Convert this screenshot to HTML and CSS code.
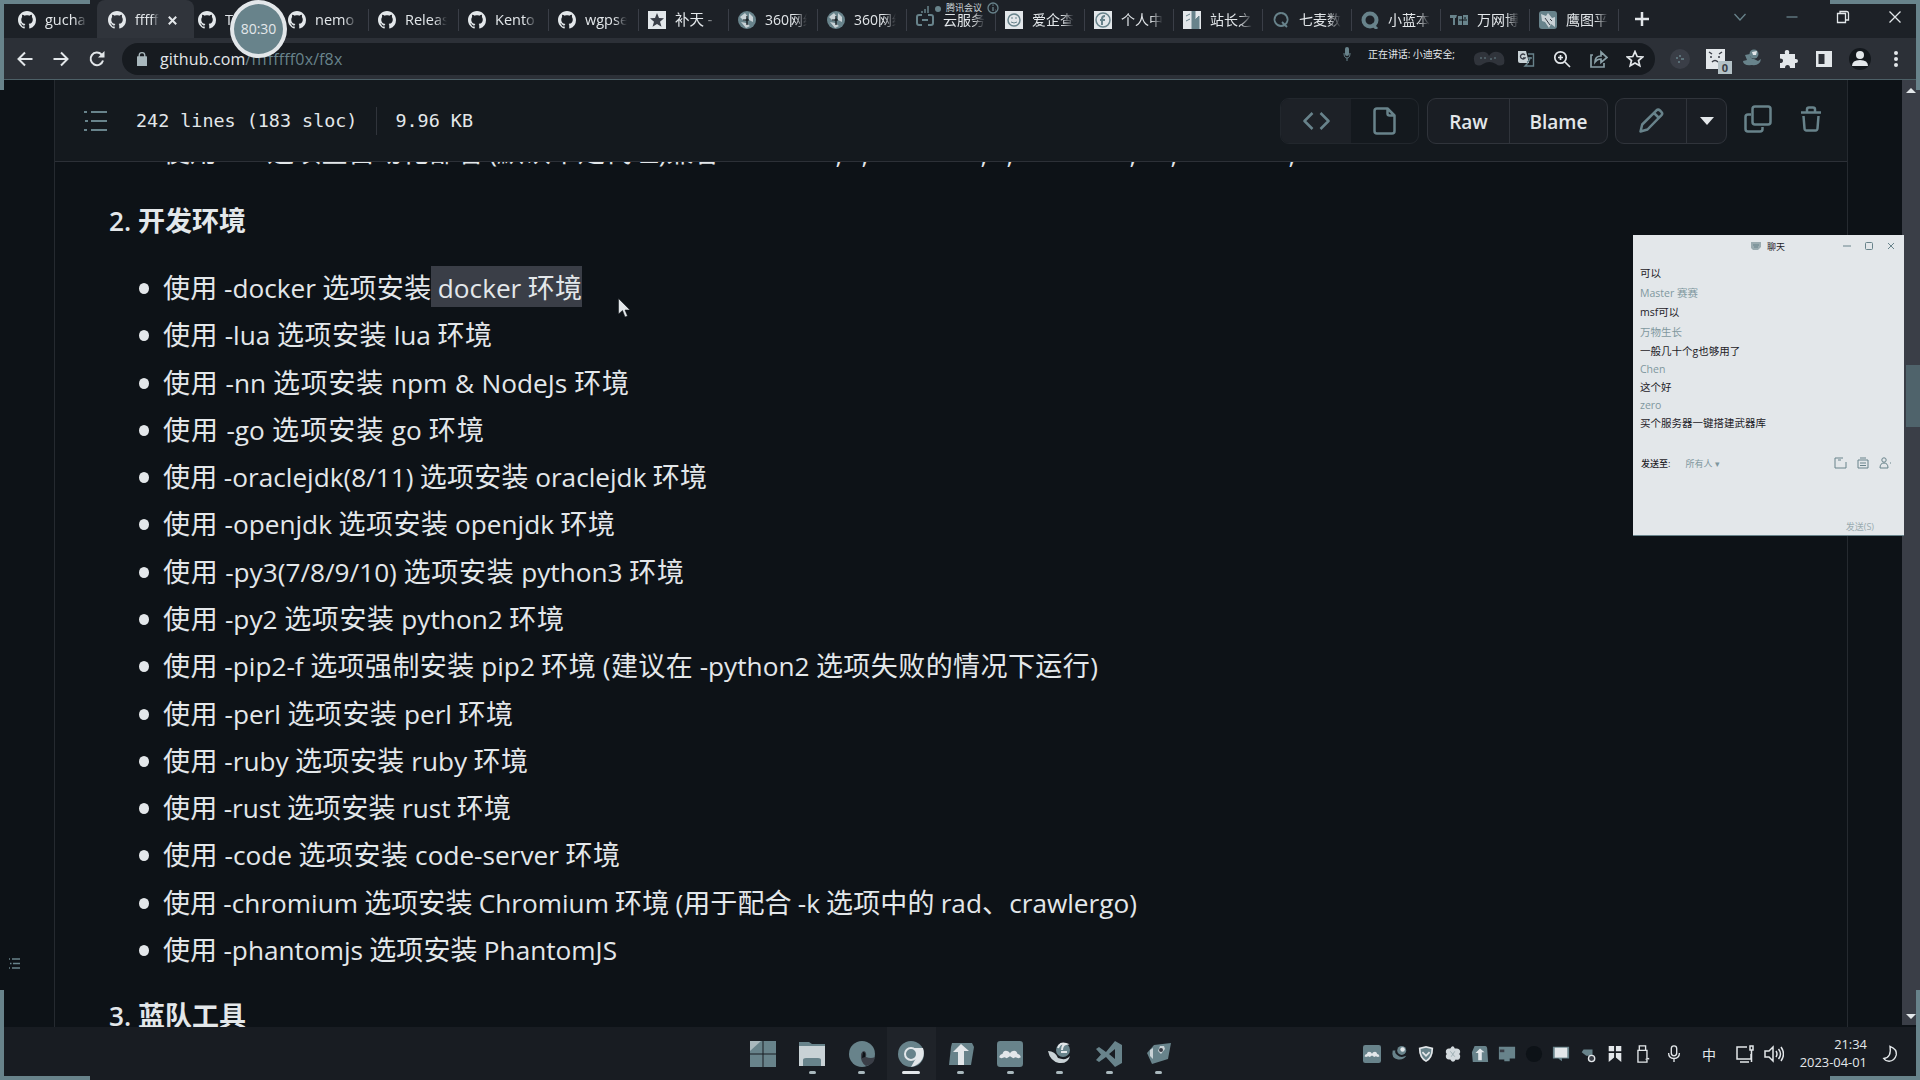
FILE: index.html
```html
<!DOCTYPE html>
<html lang="zh-CN">
<head>
<meta charset="utf-8">
<title>f8x</title>
<link rel="stylesheet" href="styles.css">
</head>
<body>
<svg class="defs">
  <symbol id="gh" viewBox="0 0 16 16"><path d="M8 0C3.58 0 0 3.58 0 8c0 3.54 2.29 6.53 5.47 7.59.4.07.55-.17.55-.38 0-.19-.01-.82-.01-1.49-2.01.37-2.53-.49-2.69-.94-.09-.23-.48-.94-.82-1.13-.28-.15-.68-.52-.01-.53.63-.01 1.08.58 1.23.82.72 1.21 1.87.87 2.33.66.07-.52.28-.87.51-1.07-1.78-.2-3.64-.89-3.64-3.95 0-.87.31-1.59.82-2.15-.08-.2-.36-1.02.08-2.12 0 0 .67-.21 2.2.82.64-.18 1.32-.27 2-.27s1.36.09 2 .27c1.53-1.04 2.2-.82 2.2-.82.44 1.1.16 1.92.08 2.12.51.56.82 1.27.82 2.15 0 3.07-1.87 3.75-3.65 3.95.29.25.54.73.54 1.48 0 1.07-.01 1.93-.01 2.2 0 .21.15.46.55.38A8.01 8.01 0 0 0 16 8c0-4.42-3.58-8-8-8z"/></symbol>
  <symbol id="globe" viewBox="0 0 18 18"><circle cx="9" cy="9" r="9" fill="#68838b"/><path d="M2 6l5-4 3 4-4 4zM11 2l4 4v5l-4-2zM3 11l5 1 4 3-4 2z" fill="#c9d2d6"/><path d="M9 5v9M5 9h6" stroke="#0d1217" stroke-width="1.200"/></symbol>
  <symbol id="meet" viewBox="0 0 24 24"><rect width="24" height="24" rx="3" fill="#68838b"/><path d="M2 15q1-3 3-3 1-3 3-3 3 0 4 2.500 1-2.500 4-2.500 2 0 3 3 2 0 3 3l-2 1-3-1-2 1-3-2-3 2-2-1-3 1z" fill="#e3e7ea"/></symbol>
</svg>

<header class="chrome">
  <div class="tabs">
    <div class="tab"><svg class="fav"><use href="#gh"/></svg><span>guchan</span></div>
    <div class="tab active"><svg class="fav"><use href="#gh"/></svg><span>ffffff</span><svg class="tab-x" viewBox="0 0 9 9"><path d="M.8.8l7.4 7.4M8.200.8L.8 8.200"/></svg></div>
    <div class="tab"><svg class="fav"><use href="#gh"/></svg><span>T</span></div>
    <div class="tab"><svg class="fav"><use href="#gh"/></svg><span>nemo</span></div>
    <div class="tab"><svg class="fav"><use href="#gh"/></svg><span>Releas</span></div>
    <div class="tab"><svg class="fav"><use href="#gh"/></svg><span>Kento</span></div>
    <div class="tab"><svg class="fav"><use href="#gh"/></svg><span>wgpse</span></div>
    <div class="tab"><svg class="fav" viewBox="0 0 18 18"><rect width="18" height="18" fill="#e3e7ea"/><path d="M9 2l2 5 5 .3-4 3.400 1.500 5L9 13l-4.500 2.700 1.500-5-4-3.400L7 7z" fill="#3a3e47"/></svg><span>补天 -</span></div>
    <div class="tab"><svg class="fav"><use href="#globe"/></svg><span>360网络</span></div>
    <div class="tab"><svg class="fav"><use href="#globe"/></svg><span>360网络</span></div>
    <div class="tab"><svg class="fav" viewBox="0 0 18 18"><path d="M6 4H3q-2 0-2 2v6q0 2 2 2h3M12 4h3q2 0 2 2v6q0 2-2 2h-3M6 9h6" fill="none" stroke="#68838b" stroke-width="2"/></svg><span>云服务</span></div>
    <div class="tab"><svg class="fav" viewBox="0 0 18 18"><rect width="18" height="18" fill="#e3e7ea"/><circle cx="9" cy="9" r="6" fill="none" stroke="#68838b" stroke-width="1.500"/><path d="M6 7h2M10 7h2M6 11q3 2 6 0" fill="none" stroke="#68838b"/></svg><span>爱企查</span></div>
    <div class="tab"><svg class="fav" viewBox="0 0 18 18"><rect width="18" height="18" fill="#e3e7ea"/><circle cx="9" cy="9" r="7" fill="none" stroke="#68838b" stroke-width="1.500"/><path d="M11 5q-3 0-3 3v6M6 9h5" fill="none" stroke="#68838b" stroke-width="2"/></svg><span>个人中</span></div>
    <div class="tab"><svg class="fav" viewBox="0 0 18 18"><rect width="18" height="18" fill="#e3e7ea"/><path d="M9 0h3v9l4-4v13h-7zM3 5l4-2M3 10l4-2" fill="#68838b" stroke="#68838b"/></svg><span>站长之</span></div>
    <div class="tab"><svg class="fav" viewBox="0 0 18 18"><path d="M9 2a6.500 6.500 0 1 0 .1 0M10 11l5 5" fill="none" stroke="#68838b" stroke-width="1.800"/></svg><span>七麦数</span></div>
    <div class="tab"><svg class="fav" viewBox="0 0 18 18"><circle cx="9" cy="9" r="6.500" fill="none" stroke="#68838b" stroke-width="4"/><path d="M11 13l5 5" stroke="#68838b" stroke-width="3"/></svg><span>小蓝本</span></div>
    <div class="tab"><svg class="fav" viewBox="0 0 18 18"><path d="M0 4h7l-1 3H5v7H3V7H0zM8 5h4v9H8zM13 4h5v10h-5z" fill="#68838b"/><path d="M9 9h8M14 7h2" stroke="#0d1217"/></svg><span>万网博</span></div>
    <div class="tab"><svg class="fav" viewBox="0 0 18 18"><rect width="18" height="18" rx="3" fill="#68838b"/><path d="M2 3l5 2 2-3 4 5 3-1v10l-4-3-2 4-4-6-3-1z" fill="#c9d2d6"/><path d="M6 7l5 7M11 8l2 2" stroke="#3a3e47"/></svg><span>鹰图平</span></div>
    <svg class="plus" viewBox="0 0 14 14"><path d="M7 0v14M0 7h14"/></svg>
    <div class="winctl">
      <svg viewBox="0 0 16 16"><path class="dim" d="M2.500 5L8 11l5.500-6"/></svg>
      <svg viewBox="0 0 16 16"><path class="dim" d="M2.500 8h11"/></svg>
      <svg viewBox="0 0 16 16"><path d="M2.500 4.500h8v9h-8zM5 4V2.500h6.500q2 0 2 2V11H11"/></svg>
      <svg viewBox="0 0 16 16"><path d="M2.500 2.500l11 11M13.500 2.500l-11 11"/></svg>
    </div>
  </div>
  <div class="toolbar">
    <svg class="nav" viewBox="0 0 16 16"><path d="M15.500 8H2M8 1.500L1.500 8 8 14.500"/></svg>
    <svg class="nav" viewBox="0 0 16 16"><path d="M.5 8H14M8 1.500L14.500 8 8 14.500"/></svg>
    <svg class="nav" viewBox="0 0 16 16"><path d="M14 9.500A6.300 6.300 0 1 1 12.500 3.500L14.500 5.500"/><path d="M15.500 0v6.500H9z" class="solid"/></svg>
    <div class="omnibox">
      <svg class="lock" viewBox="0 0 10 14"><rect y="5" width="10" height="9" rx="1"/><path d="M2.200 6V3.500a2.800 2.800 0 0 1 5.600 0V6"/></svg>
      <span class="url">github.com<span>/ffffffff0x/f8x</span></span>
      <div class="speaker">
        <svg viewBox="0 0 8 14"><rect x="2" width="4" height="9" rx="2"/><path d="M1 6q0 5 3 5t3-5M4 11v3"/></svg>
        <span>正在讲话: 小迪安全;</span>
      </div>
      <svg class="blob" viewBox="0 0 32 16"><path d="M2 13Q-2 2 8 1q6-1 8 4 3-5 9-4 8 2 6 12-5 3-8 0-7-4-13 0-4 3-8 0z" fill="#30343b"/><path d="M7 7h2M12 6v2M17 8h2M22 6v2" stroke="#68838b"/></svg>
      <svg class="act" viewBox="0 0 18 18"><path d="M1 1h8l3 12H3q-2 0-2-2z" fill="#c9d2d6"/><path d="M11 4h5.500v12H8l3-3M11 8h4M13 7q0 4-3 5" fill="none" stroke="#68838b" stroke-width="1.400"/><path d="M8 5a2.500 2.500 0 1 0 0 3H6" fill="none" stroke="#3a3e47" stroke-width="1.300"/></svg>
      <svg class="act line" viewBox="0 0 18 18"><circle cx="7.500" cy="7.500" r="5.700"/><path d="M12 12l5 5M5 7.500h5M7.500 5v5"/></svg>
      <svg class="act line teal" viewBox="0 0 18 18"><path d="M3 5H1v12h13v-4"/><path d="M5 12q0-6 6-6V2l6 5.500-6 5V9q-4 0-6 3z"/></svg>
      <svg class="act line" viewBox="0 0 18 18"><path d="M9 1.500l2.200 5 5.400.5-4.100 3.500 1.300 5.300L9 13l-4.800 2.800 1.300-5.300L1.400 7l5.400-.5z"/></svg>
    </div>
    <div class="exts">
      <svg viewBox="0 0 20 20"><circle cx="10" cy="10" r="10" fill="#3a3e47"/><path d="M6 9h2M10 6v2M11 10h3M9 12v2" stroke="#68838b" stroke-width="1.500"/></svg>
      <svg viewBox="0 0 20 20"><rect width="19" height="20" fill="#e3e7ea"/><path d="M3 3l3 2M16 3l-3 2M5 7v2M13 7v2M6 13q3-3 6 0" stroke="#3a3e47" stroke-width="1.500" fill="none"/></svg>
      <svg viewBox="0 0 20 20"><path d="M3 6l5-1q0 5 4 5l4 2 3-2q-1 7-9 6-9 1-9-4l4-1z" fill="#68838b"/><circle cx="12" cy="5" r="4.500" fill="#68838b"/><path d="M10 3l5-1-1 4h-3z" fill="#e3e7ea"/></svg>
      <svg viewBox="0 0 20 20"><path d="M2 5h5q-1-4 2-4t2 4h6v5q3-.5 3 2t-3 2v5h-5q0-3-2.500-3T7 19H2v-5q3 0 3-2.300T2 9.500z" fill="#e3e7ea"/></svg>
      <svg viewBox="0 0 20 20"><path d="M2 2h16v16H2zM4.500 5v10h6V5z" fill="#e3e7ea" fill-rule="evenodd"/></svg>
      <svg viewBox="0 0 20 20"><circle cx="10" cy="10" r="11" fill="#14181d"/><circle cx="10" cy="6" r="4" fill="#e3e7ea"/><path d="M2 17q0-6 8-6t8 6z" fill="#e3e7ea"/></svg>
      <svg viewBox="0 0 20 20"><circle cx="10" cy="4" r="2" fill="#e3e7ea"/><circle cx="10" cy="10" r="2" fill="#e3e7ea"/><circle cx="10" cy="16" r="2" fill="#e3e7ea"/></svg>
    </div>
  </div>
</header>

<main class="page">
  <aside class="side"><svg viewBox="0 0 11 11"><path d="M0 1h1M3 1h8M1 5.500h1.500M4 5.500h7M0 10h1M3 10h8"/></svg></aside>
  <section class="blob-box">
    <div class="filebar">
      <svg class="toc" viewBox="0 0 24 22"><path d="M0 2h3M7 2h16M1 11h3M7 11h16M0 20h3M7 20h16"/></svg>
      <span class="stat">242 lines (183 sloc)</span><i class="vr"></i><span class="stat">9.96 KB</span>
      <div class="group views">
        <div class="on"><svg width="27" height="18" viewBox="0 0 27 18"><path d="M9.500 1L1.500 9l8 8M17.500 1l8 8-8 8"/></svg></div>
        <div><svg width="23" height="28" viewBox="0 0 23 28"><path d="M4 1.500h10.500l7 7V24q0 2.500-2.500 2.500H4Q1.500 26.500 1.500 24V4Q1.500 1.500 4 1.500zM14.500 2v4.500q0 2 2 2H21"/></svg></div>
      </div>
      <div class="group raw"><div>Raw</div><div>Blame</div></div>
      <div class="group edit">
        <div><svg width="25" height="25" viewBox="0 0 25 25"><path d="M1.500 23.500l1.700-7L17.500 2.300q1.700-1.500 3.500.2l1.300 1.300q1.700 1.700.2 3.400L8.500 21.500zM15 5l5 5"/></svg></div>
        <div><svg width="14" height="8" viewBox="0 0 14 8"><path class="caret" d="M0 0h14L7 8z"/></svg></div>
      </div>
      <svg class="copy" width="28" height="28" viewBox="0 0 28 28"><path d="M11 1.500h13q2.500 0 2.500 2.500v13q0 2.500-2.500 2.500H11q-2.500 0-2.500-2.500V4q0-2.500 2.500-2.500zM7 9.500H4Q1.500 9.500 1.500 12v12q0 2.500 2.500 2.500h12q2.500 0 2.500-2.500v-2"/></svg>
      <svg class="trash" width="22" height="26" viewBox="0 0 22 26"><path d="M1 6.500h20M7 6V3.500Q7 1.500 9 1.500h4q2 0 2 2V6M3.500 10l1 12.500q.2 2 2 2h9q1.800 0 2-2l1-12.500"/></svg>
    </div>
    <article class="md">
      <div class="cut"><span>使用 <b class="gap"></b>选项全自动化部署 <i>(</i>默认不走代理<i>)</i>兼容</span><em class="c1">,</em><em class="c2">,</em><em class="c3">,</em><em class="c2">,</em><em class="c4">,</em><em class="c5">,</em><em class="c6">,</em></div>
      <h3><i>2.</i><span>开发环境</span></h3>
      <ul>
        <li style="width:419px">使用 <i>-docker</i> 选项安装<mark> <i>docker</i> 环境</mark></li>
        <li style="width:329px">使用 <i>-lua</i> 选项安装 <i>lua</i> 环境</li>
        <li style="width:466px">使用 <i>-nn</i> 选项安装 <i>npm &amp; NodeJs</i> 环境</li>
        <li style="width:321px">使用 <i>-go</i> 选项安装 <i>go</i> 环境</li>
        <li style="width:544px">使用 <i>-oraclejdk(8/11)</i> 选项安装 <i>oraclejdk</i> 环境</li>
        <li style="width:452px">使用 <i>-openjdk</i> 选项安装 <i>openjdk</i> 环境</li>
        <li style="width:521px">使用 <i>-py3(7/8/9/10)</i> 选项安装 <i>python3</i> 环境</li>
        <li style="width:401px">使用 <i>-py2</i> 选项安装 <i>python2</i> 环境</li>
        <li style="width:935px">使用 <i>-pip2-f</i> 选项强制安装 <i>pip2</i> 环境 <i>(</i>建议在 <i>-python2</i> 选项失败的情况下运行<i>)</i></li>
        <li style="width:350px">使用 <i>-perl</i> 选项安装 <i>perl</i> 环境</li>
        <li style="width:365px">使用 <i>-ruby</i> 选项安装 <i>ruby</i> 环境</li>
        <li style="width:348px">使用 <i>-rust</i> 选项安装 <i>rust</i> 环境</li>
        <li style="width:457px">使用 <i>-code</i> 选项安装 <i>code-server</i> 环境</li>
        <li style="width:974px">使用 <i>-chromium</i> 选项安装 <i>Chromium</i> 环境 <i>(</i>用于配合 <i>-k</i> 选项中的 <i>rad</i>、<i>crawlergo)</i></li>
        <li style="width:454px">使用 <i>-phantomjs</i> 选项安装 <i>PhantomJS</i></li>
      </ul>
      <h3 class="next"><i>3.</i><span>蓝队工具</span></h3>
    </article>
  </section>
  <div class="scroll"><i class="up"></i><b></b><i class="down"></i></div>
</main>

<footer class="taskbar">
  <div class="apps">
    <div><svg viewBox="0 0 26 26"><path d="M0 0h12.500v12.500H0zM13.500 0H26v12.500H13.500zM0 13.500h12.500V26H0zM13.500 13.500H26V26H13.500z" fill="#68838b"/><path d="M0 0h11L0 10z" fill="#a9b8bd"/></svg></div>
    <div class="run"><svg viewBox="0 0 26 26"><path d="M0 1h10l3 2h13v22H0z" fill="#68838b"/><path d="M0 5h26v20H0z" fill="#c9d2d6"/><path d="M4 25v-6q0-2 3-2h12q3 0 3 2v6z" fill="#68838b"/></svg></div>
    <div class="run"><svg viewBox="0 0 26 26"><circle cx="13" cy="13" r="13" fill="#68838b"/><path d="M12 13q1-3 3-3 3 1 2 6 5 2 9 0-1 8-9 9-6-4-5-12z" fill="#3a3e47"/><path d="M14 11q3 0 2 5l-3 1z" fill="#0d1217"/></svg></div>
    <div class="run wide"><svg viewBox="0 0 26 26"><circle cx="13" cy="13" r="13" fill="#68838b"/><path d="M13 7h12q3 10-5 16-4 3-7 3l5-9z" fill="#e3e7ea"/><circle cx="13" cy="13" r="6" fill="#68838b" stroke="#e3e7ea" stroke-width="2"/></svg></div>
    <div class="run"><svg viewBox="0 0 26 26"><path d="M4 2h20l2 4-3 18H1l2-18z" fill="#68838b"/><path d="M13 3l8 7h-5v14h-6V11H5z" fill="#e3e7ea"/></svg></div>
    <div class="run"><svg><use href="#meet"/></svg></div>
    <div class="run"><svg viewBox="0 0 26 26"><circle cx="16" cy="9" r="7" fill="#68838b"/><path d="M1 10q7 0 10 7 8 3 12-2-2 8-11 7Q3 20 1 10z" fill="#c9d2d6"/><path d="M11 7q2-6 8-4-4 1-4 6M14 11h6" stroke="#e3e7ea" stroke-width="2" fill="none"/></svg></div>
    <div class="run"><svg viewBox="0 0 26 26"><path d="M0 8l3-2 7 5L19 0l7 4v18l-7 4-9-10-7 5-3-2 5-5.500zM19 8l-6 5 6 5z" fill="#68838b" fill-rule="evenodd"/></svg></div>
    <div class="run"><svg viewBox="0 0 26 26"><path d="M8 4l17-2-3 16L6 23 1 12z" fill="#68838b"/><path d="M4 9l3-2v11l-3-3zM14 5h4l1 3-4 5-3-3z" fill="#c9d2d6"/><circle cx="15" cy="9" r="2" fill="#3a3e47"/></svg></div>
  </div>
  <div class="tray">
    <svg><use href="#meet"/></svg>
    <svg viewBox="0 0 20 20"><circle cx="13" cy="6" r="5" fill="#68838b"/><circle cx="14" cy="5" r="2.500" fill="#e3e7ea"/><path d="M3 6q-2 9 6 10 6 1 9-4-6 3-10-1-3-2-2-5z" fill="#68838b"/></svg>
    <svg viewBox="0 0 20 20"><path d="M2 3l8-2 8 2q0 12-8 16Q2 15 2 3z" fill="#e3e7ea"/><path d="M4 4.500L10 3l6 1.500Q16 13 10 17 4 13 4 4.500z" fill="#68838b"/><path d="M6 8l4 4 4-4" stroke="#e3e7ea" stroke-width="2" fill="none"/></svg>
    <svg viewBox="0 0 20 20"><path d="M7 4q3-5 5 0 6-1 6 4-2 2 0 4 0 6-5 4-3 5-6 0-5 1-5-4 2-2 0-4 0-5 5-4z" fill="#d3dade"/><path d="M7 7l5 6M12 7l-4 6" stroke="#9aabb0"/></svg>
    <svg viewBox="0 0 20 20"><path d="M4 1h12q2 0 2 3l1 15H2L1 8z" fill="#68838b"/><path d="M10 4l5 4h-3v9H8V9H5z" fill="#e3e7ea"/></svg>
    <svg viewBox="0 0 20 20"><path d="M1 2h18v13H13v3H7v-2H1z" fill="#68838b"/><path d="M2 5h5v3H2z" fill="#3a3e47"/></svg>
    <svg viewBox="0 0 20 20"><circle cx="10" cy="10" r="9" fill="#0d1217"/></svg>
    <svg viewBox="0 0 20 20"><path d="M1 2h18v13H11v3l-4-3H1z" fill="#68838b"/><path d="M3 3h14v11H3z" fill="#e3e7ea"/></svg>
    <svg viewBox="0 0 20 20"><path d="M5 5h10v7H8L3 8z" fill="#68838b"/><circle cx="14" cy="15" r="3.500" fill="#3a3e47" stroke="#e3e7ea" stroke-width="1.500"/></svg>
    <svg viewBox="0 0 20 20"><path d="M3 1h6v6H3zM11 1h6v6h-6zM3 9h6v5l-6 5zM11 9h6v10l-6-5z" fill="#e3e7ea"/></svg>
    <svg class="w" viewBox="0 0 20 20"><path d="M7 1h7v5H7zM5.500 6h10v13h-10zM14 16l4-1"/></svg>
    <svg class="w mic" viewBox="0 0 20 20"><rect x="7" y="1" width="6" height="11" rx="3"/><path d="M4 9q0 6 6 6t6-6M10 15v4"/></svg>
    <span class="ime">中</span>
    <svg class="w net" viewBox="0 0 20 20"><path d="M12 3H2v12h14v-5M5 18h9M15 2h3v4h-3zM16.500 6v12"/></svg>
    <svg class="w vol" viewBox="0 0 20 20"><path d="M1 7h4l4-4v14l-4-4H1zM12 7q2 3 0 6M14.500 5q4 5 0 10M17 3q5 7 0 14"/></svg>
    <div class="clock"><span>21:34</span><span>2023-04-01</span></div>
    <svg class="w moon" viewBox="0 0 20 20"><path d="M10 1.500q8 3 7 9.500-2 7-8 7-4 0-6-3 9-1 7-13.500z"/></svg>
  </div>
</footer>

<div class="badge">0</div>
<div class="meeting"><svg viewBox="0 0 24 10"><path d="M1 10V8M4 10V6M7 10V3" stroke="#68838b" stroke-width="1.500"/><circle cx="17" cy="6" r="3" fill="#68838b"/></svg><span>腾讯会议</span><svg class="info" viewBox="0 0 12 12"><circle cx="6" cy="6" r="5"/><path d="M6 5v4M6 2.500v1.200"/></svg></div>
<div class="timer">80:30</div>
<svg class="cursor" viewBox="0 0 13 20"><path d="M.5.500v15.500l4-3.500 2.500 6.500 2.500-1-2.500-6h5z"/></svg>

<section class="chat">
  <div class="chat-title"><svg viewBox="0 0 10 8"><path d="M0 0h10v5L7 8H2L0 6z" fill="#9aabb0"/><path d="M2 3h6M3 5h4" stroke="#68838b"/></svg><span>聊天</span>
    <div class="chat-ctl"><svg viewBox="0 0 8 8"><path d="M0 4h8"/></svg><svg viewBox="0 0 8 8"><rect x=".5" y=".5" width="7" height="7" rx="1"/></svg><svg viewBox="0 0 8 8"><path d="M1 1l6 6M7 1L1 7"/></svg></div>
  </div>
  <div class="msgs">
    <p>可以</p><p class="n">Master 赛赛</p><p>msf可以</p><p class="n">万物生长</p><p>一般几十个g也够用了</p><p class="n">Chen</p><p>这个好</p><p class="n">zero</p><p>买个服务器一键搭建武器库</p>
  </div>
  <div class="sendto"><b>发送至:</b><span>所有人 ▾</span>
    <svg viewBox="0 0 14 12"><path d="M9 1H1v10h11V5M4 3h3"/></svg><svg viewBox="0 0 14 12"><path d="M2 3h10v8H2zM4 1h6M4 6h6M4 8.500h6"/></svg><svg viewBox="0 0 14 12"><circle cx="6" cy="3" r="2.200"/><path d="M2 11q0-5 4-5t4 5zM12 6h1"/></svg>
  </div>
  <div class="send">发送(S)</div>
</section>

<i class="corner tl"></i><i class="corner tr"></i><i class="corner bl"></i><i class="corner br"></i>
</body>
</html>
```
FILE: styles.css
```css
:root { --ink: #0d1217; --grey: #3a3e47; --teal: #68838b; --white: #e3e7ea; }
* { box-sizing: border-box; }
body { margin: 0; width: 1920px; height: 1080px; overflow: hidden; display: flex; flex-direction: column; background: var(--ink); color: var(--white); font-family: "Open Sans", "Noto Sans CJK SC", sans-serif; }
i, em { font-style: normal; }
svg { flex: none; display: block; }
.defs { display: none; }

.chrome { height: 80px; flex: none; border-bottom: 1px solid #4d6067; background: #1d2127; }
.tabs { height: 38px; display: flex; align-items: center; padding-left: 9px; }
.tab { width: 90px; height: 38px; flex: none; display: flex; align-items: center; padding: 2px 8px 0 9px; position: relative; }
.tab:nth-child(n+9) { width: 89px; }
.tab:nth-child(n+4)::after { content: ""; position: absolute; right: 0; top: 9px; width: 1px; height: 22px; background: var(--grey); }
.tab.active { background: #30343b; border-radius: 8px 8px 0 0; margin-left: -2px; width: 97px; padding-left: 11px; margin-right: -5px; }
.fav { width: 18px; height: 18px; fill: var(--white); }
.tab span { margin-left: 9px; width: 42px; font-size: 14px; line-height: 20px; white-space: nowrap; overflow: hidden; -webkit-mask: linear-gradient(90deg, #000 70%, transparent); mask: linear-gradient(90deg, #000 70%, transparent); }
.tab:not(.active):nth-child(-n+8) span { font-size: 14.500px; }
.tab.active span { width: 24px; }
.tab-x { width: 9px; height: 9px; margin-left: 9px; stroke: var(--white); stroke-width: 2; }
.plus { width: 14px; height: 14px; margin-left: 16px; stroke: var(--white); stroke-width: 2.500; }
.winctl { margin-left: auto; padding-right: 17px; display: flex; gap: 35.600px; margin-top: -4px; }
.winctl svg { width: 16px; height: 16px; fill: none; stroke: var(--white); stroke-width: 1.300; }
.winctl .dim { stroke: var(--teal); }

.toolbar { height: 41px; display: flex; align-items: center; background: #2c3037; padding-left: 17px; }
.nav { width: 16px; height: 16px; margin-right: 20px; fill: none; stroke: var(--white); stroke-width: 2; }
.nav .solid { fill: var(--white); stroke: none; }
.omnibox { width: 1533px; height: 32px; margin-left: -3px; border-radius: 16px; background: #171b20; display: flex; align-items: center; padding: 0 11px 0 15px; }
.lock { width: 10px; height: 14px; fill: #a9b8bd; stroke: #a9b8bd; stroke-width: 1.300; }
.lock path { fill: none; }
.url { margin-left: 13px; font-size: 16px; line-height: 24px; letter-spacing: .12px; }
.url span { color: var(--teal); }
.speaker { margin-left: auto; display: flex; align-items: center; gap: 17px; font-size: 10px; line-height: 14px; padding-bottom: 9px; white-space: nowrap; }
.speaker span { width: 80px; letter-spacing: -.1px; }
.speaker svg { width: 8px; height: 14px; fill: var(--teal); }
.speaker path { fill: none; stroke: var(--teal); }
.blob { width: 32px; height: 16px; margin: 0 12px 0 25px; }
.act { width: 18px; height: 18px; margin-right: 18.300px; }
.act:last-child { margin-right: 0; }
.line { fill: none; stroke: var(--white); stroke-width: 1.700; }
.line.teal { stroke: #8a9fa6; }
.exts { display: flex; gap: 16px; margin-left: 15px; }
.exts svg { width: 20px; height: 20px; overflow: visible; }

.page { height: 947px; flex: none; display: flex; overflow: hidden; }
.side { width: 54px; flex: none; display: flex; align-items: flex-end; padding: 0 0 58px 9px; }
.side svg { width: 11px; height: 11px; stroke: var(--teal); stroke-width: 1.600; }
.blob-box { width: 1794px; flex: none; border: solid #252a30; border-width: 0 1px; }
.filebar { height: 82px; background: #14191e; border-bottom: 1px solid #2c3037; display: flex; align-items: center; padding-left: 29px; }
.toc { width: 24px; height: 22px; stroke: var(--teal); stroke-width: 2.200; }
.stat { font: 18.400px/24px "DejaVu Sans Mono", monospace; white-space: pre; }
.toc + .stat { margin-left: 28px; }
.vr { width: 1px; height: 28px; background: #30343b; margin: 0 18px 0 19px; }
.group { display: flex; height: 46px; border: 1px solid #30343b; border-radius: 9px; background: #1a1e24; overflow: hidden; }
.group > div { display: flex; align-items: center; justify-content: center; font-size: 19px; font-weight: 600; }
.group > div + div { border-left: 1px solid #30343b; }
.group svg, .copy, .trash { fill: none; stroke: var(--teal); stroke-width: 2.500; stroke-linejoin: round; }
.views { margin-left: auto; width: 139px; background: transparent; border-color: #22272d; }
.views .on { width: 70px; background: #1d2127; }
.views > div:last-child { flex: 1; border: 0; padding-right: 0; }
.raw { width: 181px; margin-left: 8px; }
.raw > div { padding-top: 2px; }
.raw > div:first-child { width: 81px; }
.raw > div:last-child { flex: 1; }
.edit { width: 112px; margin-left: 7px; }
.edit > div:first-child { width: 70px; }
.edit > div:last-child { flex: 1; }
.group .caret { fill: var(--white); stroke: none; }
.copy { margin-left: 17px; margin-top: -4px; }
.trash { margin: -4px 25px 0 28px; }

.md { font-family: "Noto Sans CJK SC", sans-serif; font-size: 27px; line-height: 40.400px; padding-left: 54px; white-space: nowrap; }
.md i, .md em { font-family: "Open Sans", sans-serif; font-size: 26.200px; line-height: 1; }
.md h3 { font-size: inherit; font-weight: 700; margin: 0; display: flex; align-items: baseline; height: 40px; }
.md h3 i { font-weight: 600; width: 29px; }
.cut { height: 18px; overflow: hidden; display: flex; align-items: flex-end; padding-left: 54px; margin-bottom: 20px; }
.cut > * { position: relative; bottom: 14px; height: 30px; line-height: 30px; }
.gap { display: inline-block; width: 44px; }
.cut em { width: 0; bottom: 9px; }
.c1 { margin-left: 115px; } .c2 { margin-left: 26px; } .c3 { margin-left: 119px; } .c4 { margin-left: 123px; } .c5 { margin-left: 41px; } .c6 { margin-left: 118px; }
.md ul { list-style: none; margin: 27px 0 0; padding: 0 0 0 54px; }
.md li { position: relative; height: 40.400px; margin-bottom: 6.900px; white-space: normal; text-align: justify; text-align-last: justify; }
.md li::before { content: ""; position: absolute; left: -24px; top: 16px; width: 10px; height: 11px; border-radius: 50%; background: var(--white); }
mark { padding: 1px 0; background: var(--grey); color: inherit; }
.md h3.next { margin-top: 26px; }
.scroll { width: 18px; margin-left: auto; background: var(--grey); display: flex; flex-direction: column; align-items: center; height: 945px; }
.scroll b { width: 14px; height: 62px; background: #4f636b; margin: 272px -3px auto 0; }
.up { border: 5px solid transparent; border-top: 0; border-bottom: 5px solid var(--white); margin-top: 8px; }
.down { border: 5px solid transparent; border-bottom: 0; border-top: 5px solid var(--white); margin-bottom: 6px; }

.taskbar { height: 53px; background: #181c22; display: flex; padding-left: 738px; }
.apps { display: flex; }
.apps > div { width: 49.500px; display: flex; flex-direction: column; align-items: center; padding-top: 14px; }
.apps svg { width: 26px; height: 26px; }
.run::after { content: ""; width: 7px; height: 3px; margin-top: 4px; border-radius: 2px; background: #a9b8bd; }
.run.wide { background: #1f2329; }
.run.wide::after { width: 18px; background: var(--white); }
.tray { margin-left: auto; padding-right: 21px; display: flex; align-items: center; gap: 9px; }
.tray svg { width: 18px; height: 20px; }
.w { fill: none; stroke: var(--white); stroke-width: 1.500; }
.tray .mic { margin-left: 5px; }
.ime { font-size: 14px; width: 16px; margin: 0 8px 0 10px; }
.tray .net, .tray .vol { width: 20px; }
.clock { width: 74px; display: flex; flex-direction: column; align-items: flex-end; font-size: 12.900px; line-height: 17.500px; }
.tray .moon { margin-left: 5px; }

.badge { position: absolute; left: 1718px; top: 61px; width: 14px; height: 13px; background: #b4c1c6; color: var(--grey); font-size: 11px; font-weight: 700; line-height: 13px; text-align: center; }
.meeting { position: absolute; left: 921px; top: 2px; display: flex; align-items: center; gap: 1px; font-size: 9px; line-height: 12px; color: #c9d2d6; }
.meeting svg { width: 24px; height: 10px; }
.meeting .info { width: 12px; height: 12px; margin-left: 4px; fill: none; stroke: var(--teal); stroke-width: 1.300; }
.timer { position: absolute; left: 230px; top: 0; width: 57px; height: 58px; border: 4px solid var(--white); border-radius: 50%; background: var(--teal); font-size: 14px; line-height: 49px; text-align: center; }
.cursor { position: absolute; left: 618px; top: 298px; width: 13px; height: 20px; fill: var(--white); stroke: var(--ink); stroke-width: .5; }

.chat { position: absolute; left: 1633px; top: 235px; width: 271px; height: 301px; background: var(--white); color: #1d2127; font-size: 10.500px; border-bottom: 1px solid var(--teal); }
.chat-title { height: 22px; display: flex; align-items: center; gap: 6px; padding-left: 118px; font-size: 9px; }
.chat-title > svg { width: 10px; height: 8px; }
.chat-ctl { margin-left: auto; display: flex; gap: 14px; padding-right: 9px; }
.chat-ctl svg { width: 8px; height: 8px; fill: none; stroke: var(--teal); }
.msgs { padding: 6px 0 0 7px; height: 195px; }
.msgs p { margin: 0; height: 18px; line-height: 20px; }
.msgs p:nth-child(-n+4) { height: 19.600px; }
.msgs .n { color: #7f979e; }
.sendto { display: flex; align-items: center; height: 22px; padding: 0 12px 0 8px; font-size: 9px; gap: 8px; }
.sendto b { font-weight: 500; }
.sendto span { color: #7f979e; margin: 0 auto 0 7px; }
.sendto svg { width: 14px; height: 12px; fill: none; stroke: var(--teal); }
.send { text-align: right; padding-right: 30px; margin-top: 46px; font-size: 9px; line-height: 14px; color: #9aabb0; }

.corner { position: absolute; width: 90px; height: 90px; border: 0 solid var(--teal); pointer-events: none; }
.tl { left: 0; top: 0; border-width: 4px 0 0 4px; }
.tr { right: 0; top: 0; border-width: 4px 4px 0 0; }
.bl { left: 0; bottom: 0; border-width: 0 0 4px 4px; }
.br { right: 0; bottom: 0; border-width: 0 4px 4px 0; }
```
